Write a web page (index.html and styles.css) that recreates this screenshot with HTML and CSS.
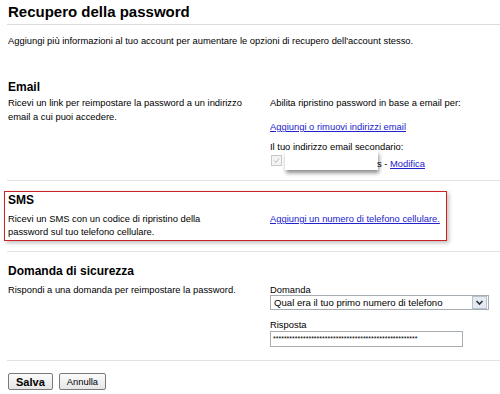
FILE: index.html
```html
<!DOCTYPE html>
<html>
<head>
    <title>Recupero della password</title>
    <link rel="stylesheet" href="styles.css">
</head>
<body>
    <div class="page">
        <h1 class="title">Recupero della password</h1>
        <p class="intro">Aggiungi più informazioni al tuo account per aumentare le opzioni di recupero dell'account stesso.</p>

        <div class="section email">
            <h2>Email</h2>
            <div class="cols">
                <div class="left">Ricevi un link per reimpostare la password a un indirizzo email a cui puoi accedere.</div>
                <div class="right">
                    <div>Abilita ripristino password in base a email per:</div>
                    <div class="gap"><a href="#">Aggiungi o rimuovi indirizzi email</a></div>
                    <div class="gap small">Il tuo indirizzo email secondario:</div>
                    <div class="secondary">
                        <span class="check">
                            <svg width="9" height="9" viewBox="0 0 9 9"><path d="M2 4.5 L3.8 6.5 L7 2.5" fill="none" stroke="#b8b8b8" stroke-width="1"/></svg>
                        </span>
                        <span class="redact"></span>
                        <span class="tail">s - <a href="#">Modifica</a></span>
                    </div>
                </div>
            </div>
        </div>

        <div class="section sms">
            <div class="highlight">
                <h2>SMS</h2>
                <div class="cols">
                    <div class="left">Ricevi un SMS con un codice di ripristino della password sul tuo telefono cellulare.</div>
                    <div class="right"><a href="#">Aggiungi un numero di telefono cellulare.</a></div>
                </div>
            </div>
        </div>

        <div class="section question">
            <h2>Domanda di sicurezza</h2>
            <div class="cols">
                <div class="left">Rispondi a una domanda per reimpostare la password.</div>
                <div class="right">
                    <div class="field-label">Domanda</div>
                    <div class="select">
                        <span>Qual era il tuo primo numero di telefono</span>
                        <span class="arrow">
                            <svg width="9" height="9" viewBox="0 0 9 9"><path d="M1.5 3 L4.5 6 L7.5 3" fill="none" stroke="#333" stroke-width="1.6"/></svg>
                        </span>
                    </div>
                    <div class="field-label spaced">Risposta</div>
                    <div class="input">*****************************************************</div>
                </div>
            </div>
        </div>

        <div class="actions">
            <button class="btn primary">Salva</button>
            <button class="btn">Annulla</button>
        </div>
    </div>
</body>
</html>
```

FILE: styles.css
```css
body {
    margin: 0;
    background: #fff;
    font-family: "Liberation Sans", Arial, sans-serif;
    font-size: 9.4px;
    color: #000;
}
.page {
    padding-left: 7px;
}
.title {
    font-size: 15px;
    font-weight: bold;
    margin: 0;
    padding: 4px 0 4px 1px;
    line-height: 16px;
    border-bottom: 1px solid #dcdcdc;
}
.intro {
    margin: 10px 0 0 1px;
    line-height: 12px;
}
.section {
    border-bottom: 1px solid #e2e2e2;
}
.section h2 {
    font-size: 12px;
    font-weight: bold;
    margin: 0;
    line-height: 14px;
}
.email {
    padding: 33px 0 10px 1px;
}
.cols {
    display: grid;
    grid-template-columns: 250px 1fr;
    column-gap: 12px;
    margin-top: 2px;
    line-height: 14px;
}
.gap {
    margin-top: 10px;
}
.small {
    margin-top: 6px;
}
a {
    color: #2222cc;
}
.secondary {
    display: flex;
    align-items: center;
    height: 19px;
    margin-top: -3px;
}
.check {
    width: 9px;
    height: 9px;
    border: 1px solid #c8c8c8;
    background: #f4f4f4;
    margin-left: 1px;
    display: flex;
}
.redact {
    width: 93px;
    height: 19px;
    background: #fff;
    margin-left: 3px;
    box-shadow: 1px 3px 4px rgba(0, 0, 0, 0.45);
}
.tail {
    margin-left: -1px;
    margin-top: 6px;
}
.sms {
    padding: 10px 0;
}
.highlight {
    margin-left: -3px;
    width: 438px;
    border: 1px solid #cc2222;
    padding: 1px 0 2px 3px;
    box-shadow: 2px 2px 4px rgba(0, 0, 0, 0.25);
}
.highlight .cols {
    grid-template-columns: 225px 1fr;
    column-gap: 37px;
    margin-top: 5px;
    line-height: 13px;
}
.question {
    padding: 12px 0 13px 1px;
}
.question .cols {
    margin-top: 5px;
}
.field-label {
    line-height: 12px;
    margin-top: 1px;
}
.spaced {
    margin-top: 9px;
}
.select {
    display: flex;
    align-items: center;
    justify-content: space-between;
    box-sizing: border-box;
    width: 219px;
    height: 15px;
    margin-top: -1px;
    border: 1px solid #a5acb2;
    padding-left: 3px;
    font-size: 9.6px;
}
.arrow {
    width: 13px;
    height: 11px;
    margin-right: 1px;
    border: 1px solid #b7c2cf;
    background: #e4e9f2;
    display: flex;
    align-items: center;
    justify-content: center;
}
.input {
    box-sizing: border-box;
    width: 193px;
    height: 16px;
    border: 1px solid #a5acb2;
    padding-left: 2px;
    font-size: 7px;
    line-height: 13px;
    overflow: hidden;
    white-space: nowrap;
}
.actions {
    padding: 12px 0 0 1px;
    display: flex;
    gap: 6px;
}
.btn {
    font-family: "Liberation Sans", Arial, sans-serif;
    font-size: 9.4px;
    height: 17px;
    padding: 0 7px;
    background: linear-gradient(#fbfbfb, #e6e6e6);
    border: 1px solid #7a7a7a;
    border-radius: 2px;
    color: #000;
}
.primary {
    font-weight: bold;
    font-size: 11px;
    padding: 0 7px;
}
```
